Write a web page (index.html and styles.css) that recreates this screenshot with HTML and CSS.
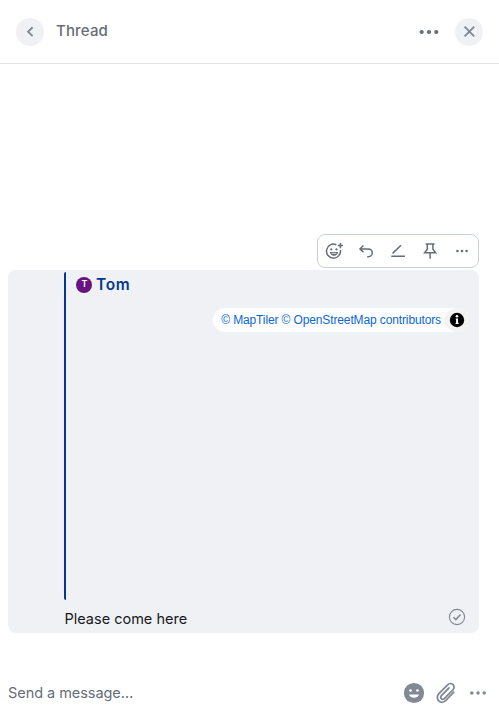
FILE: index.html
```html
<!DOCTYPE html>
<html lang="en">
<head>
<meta charset="utf-8">
<title>Thread</title>
<link rel="stylesheet" href="styles.css">
</head>
<body>
<div class="panel">
  <header class="header">
    <button class="round" aria-label="Back"><svg width="28" height="28" viewBox="0 0 28 28"><path d="M16.600 9.300 12.100 13.700l4.500 4.400" class="line back"/></svg></button>
    <h1 class="title">Thread</h1>
    <button class="options" aria-label="Options"><svg width="20" height="6" viewBox="0 0 20 6" fill="#656d77"><circle cx="2.7" cy="3" r="2.1"/><circle cx="10" cy="3" r="2.1"/><circle cx="17.3" cy="3" r="2.1"/></svg></button>
    <button class="round" aria-label="Close"><svg width="28" height="28" viewBox="0 0 28 28"><path d="m9.6 8.7 9.6 9.6m0-9.6-9.6 9.6" class="line close"/></svg></button>
  </header>
  <main class="timeline">
    <article class="message">
      <div class="toolbar">
        <button aria-label="React"><svg width="20" height="20" viewBox="0 0 20 20"><g class="line"><path d="M12.300 3.700A7 7 0 1 0 16.400 8.800M13.800 4.600h5.200M16.400 2v5.200"/></g><g fill="#656d77"><circle cx="7.300" cy="8.300" r="1.150"/><circle cx="12.500" cy="8.300" r="1.150"/><path d="M5.800 11h8.400c-.4 2.300-2.100 3.800-4.200 3.800S6.200 13.300 5.800 11z"/></g><path d="M7.600 12.300h4.800" stroke="#fff" stroke-width=".8"/></svg></button>
        <button aria-label="Reply"><svg width="20" height="20" viewBox="0 0 20 20"><path class="line" d="M7.400 4.400 4 7.900l3.400 3.400M4.300 7.900h8.100a3.900 3.900 0 0 1 0 7.800h-1.200"/></svg></button>
        <button aria-label="Edit"><svg width="20" height="20" viewBox="0 0 20 20"><path class="line" d="M4.600 12.400 13 4.200M3.300 15.200h13.600"/></svg></button>
        <button aria-label="Pin"><svg width="20" height="20" viewBox="0 0 20 20"><path class="line" d="M5.600 3h9M7.300 3v5.300l-2.700 3.400h11l-2.700-3.400V3M10.100 11.700v6"/></svg></button>
        <button aria-label="More"><svg width="20" height="20" viewBox="0 0 20 20" fill="#656d77"><circle cx="5.400" cy="10" r="1.300"/><circle cx="10" cy="10" r="1.300"/><circle cx="14.600" cy="10" r="1.300"/></svg></button>
      </div>
      <div class="quote">
        <div class="sender"><span class="avatar">T</span><span class="name">Tom</span></div>
        <div class="map">
          <div class="attribution"><span>© MapTiler © OpenStreetMap contributors</span><span class="info"><svg width="24" height="24" viewBox="0 0 24 24"><circle cx="12" cy="12" r="7.200"/><g fill="#fff"><circle cx="12" cy="8.200" r="1.300"/><path d="M10.700 10.400H13v4.400h.6V16h-3v-1.200h.5v-3.200h-.4z"/></g></svg></span></div>
        </div>
      </div>
      <div class="body"><p>Please come here</p><svg class="sent" width="18" height="18" viewBox="0 0 18 18" fill="none" stroke="#808994"><circle cx="9" cy="9" r="7.600" stroke-width="1.100"/><path d="m5.500 9.300 2.300 2.300 4.700-5" stroke-width="1.500"/></svg></div>
    </article>
  </main>
  <footer class="composer">
    <span class="placeholder">Send a message…</span>
    <svg width="22" height="22" viewBox="0 0 22 22"><circle cx="11" cy="11" r="10.100" fill="#808994"/><g fill="#fff"><circle cx="7.500" cy="8.500" r="1.350"/><circle cx="14.500" cy="8.500" r="1.350"/><path d="M6 12.500h10c-.7 2.100-2.700 3.300-5 3.300s-4.300-1.200-5-3.300z"/></g></svg>
    <svg width="22" height="22" viewBox="0 0 22 22" fill="none" stroke="#808994" stroke-width="1.800" stroke-linecap="round"><path d="m18.800 10.200-7.900 8.200c-2 2-5.100 2.300-7.100.4s-1.900-5 .1-7.100l8.700-8.900c1.500-1.500 3.900-1.600 5.400-.2s1.400 3.800-.1 5.300l-8.600 8.700c-.8.900-2.200.9-3 .1s-.8-2.200.1-3.100L13.900 6"/></svg>
    <svg width="22" height="22" viewBox="0 0 22 22" fill="#808994"><circle cx="4.800" cy="11" r="1.750"/><circle cx="11" cy="11" r="1.750"/><circle cx="17.200" cy="11" r="1.750"/></svg>
  </footer>
</div>
</body>
</html>
```
FILE: styles.css
```css
* { box-sizing: border-box; }
body { margin: 0; background: #fff; font: 15px/24px Inter, sans-serif; color: #17191c; }
button { display: flex; align-items: center; justify-content: center; border: 0; padding: 0; background: none; }
svg { display: block; flex: none; }
h1, p { margin: 0; }
.panel { height: 720px; display: flex; flex-direction: column; overflow: hidden; }
.header { height: 64px; display: flex; align-items: center; padding: 0 16px; border-bottom: 1px solid #e3e5eb; }
.round { width: 28px; height: 28px; border-radius: 50%; background: #f0f1f5; }
.title { flex: 1; margin: -2px 0 0 12px; font-size: 15px; font-weight: 500; letter-spacing: .15px; color: #656d77; }
.options { margin-right: 16px; }
.line { fill: none; stroke: #656d77; stroke-width: 1.500; }
.line.back { stroke: #808994; stroke-width: 1.900; }
.line.close { stroke: #808994; stroke-width: 1.900; }
.timeline { flex: 1; display: flex; flex-direction: column; justify-content: flex-end; padding: 0 20px 33px 8px; }
.message { position: relative; height: 363px; padding: 2px 10px 0 56px; background: #f0f1f5; border-radius: 8px; }
.toolbar { position: absolute; right: 0; top: -36px; width: 162px; height: 34px; padding: 2px 0; display: flex; border: 1px solid #c9cfd8; border-radius: 8px; background: #fff; }
.toolbar button { flex: 1; }
.quote { height: 328px; border-left: 2px solid #04388f; border-radius: 2px; padding-left: 10px; }
.sender { height: 26px; display: flex; align-items: center; gap: 4px; }
.avatar { width: 16px; height: 16px; padding-left: 1px; border-radius: 50%; background: #671481; color: #fff; font-size: 9px; line-height: 14px; text-align: center; font-weight: 600; }
.name { color: #04388f; font-weight: 600; font-size: 15.500px; letter-spacing: .7px; }
.map { display: flex; justify-content: flex-end; padding-top: 10px; }
.attribution { display: flex; height: 24px; padding-left: 8px; border-radius: 12px; background: #fff; font: 12px/24px "Liberation Sans", sans-serif; letter-spacing: -.125px; color: #0b68d8; }
.info { margin-left: 4px; border-radius: 50%; background: #f2f2f2; }
.body { display: flex; justify-content: space-between; align-items: center; height: 35px; padding-right: 3px; }
.body p { padding: 3px 0 0 .5px; font-size: 14.500px; }
.sent { margin-top: -2px; }
.composer { height: 54px; display: flex; align-items: center; gap: 10px; padding: 0 10px 0 8px; }
.placeholder { flex: 1; color: #656d77; font-size: 14.500px; letter-spacing: -.05px; }
```
